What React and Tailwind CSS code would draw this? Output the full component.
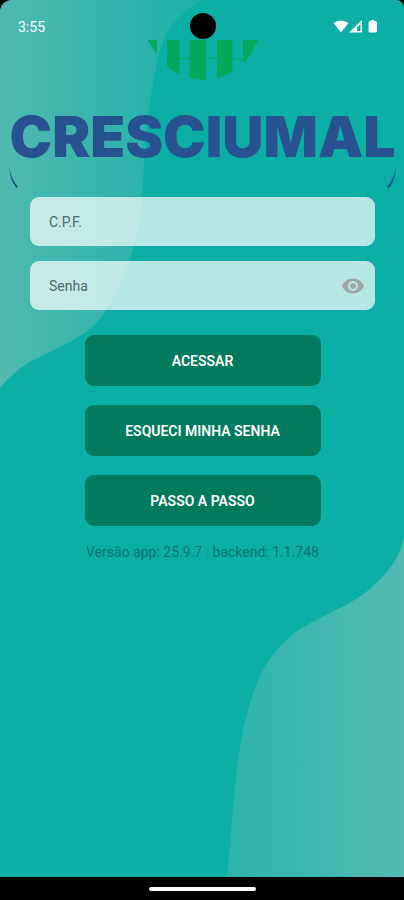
import { useState } from "react";
import { MdVisibility, MdVisibilityOff } from "react-icons/md";

function Backdrop() {
  return (
    <svg
      className="absolute inset-0 h-full w-full"
      viewBox="0 0 404 877"
      preserveAspectRatio="none"
      aria-hidden="true"
    >
      <defs>
        <linearGradient id="leftWave" gradientUnits="userSpaceOnUse" x1="0" y1="0" x2="200" y2="0">
          <stop offset="0" stopColor="#50b9b0" />
          <stop offset="1" stopColor="#1cb1a8" />
        </linearGradient>
        <linearGradient id="rightWave" gradientUnits="userSpaceOnUse" x1="226" y1="0" x2="404" y2="0">
          <stop offset="0" stopColor="#2cb4aa" />
          <stop offset="1" stopColor="#54bab3" />
        </linearGradient>
      </defs>
      <path
        fill="url(#leftWave)"
        d="M0 0H201C184 12 169 24 163 41C156 60 153 82 149 110C144 145 144 168 143 185C141 225 132 262 118 289C107 311 96 327 80 336C62 347 45 354 30 362C18 369 8 378 0 388Z"
      />
      <path
        fill="url(#rightWave)"
        d="M404 534C402 556 388 573 371 588C355 602 335 610 317 620C288 633 268 655 256 686C246 711 240 742 236 778C233 808 230 842 227 877H404Z"
      />
    </svg>
  );
}

function StatusBar() {
  return (
    <div className="relative grid h-10 grid-cols-3 items-center pt-3.5 pr-[25px] pl-[17px] text-white">
      <span className="text-sm leading-5">3:55</span>
      <span />
      <svg className="h-[15px] w-[46px] justify-self-end" viewBox="0 0 46 15" fill="currentColor" aria-label="Wi-Fi, sinal e bateria" role="img">
        <path d="M0.5 3Q8 -2 15.500 3L8 12.500Z" />
        <path fillRule="evenodd" d="M16 12.500L29 0V12.500ZM24 11H27.500V4L24 7.500Z" />
        <path d="M38 0H41V1H42.500Q44 1.500 44 3V11Q44 12.500 42.500 12.500H37Q35.500 12.500 35.500 11V3Q35.500 1.500 37 1H38Z" />
      </svg>
      <span className="absolute top-[13px] left-1/2 size-[26px] -translate-x-1/2 rounded-full bg-black" />
    </div>
  );
}

function Brand() {
  return (
    <div className="flex flex-col items-center">
      <svg className="h-10 w-[110px]" viewBox="0 0 110 40" fill="#05a95b" aria-hidden="true">
        <path d="M0 0H9V14Q4 8 0 0Z" />
        <path d="M19 0H31.500V34Q24 31 19 26Z" />
        <path d="M41.500 0H58V40Q49 40 41.500 38Z" />
        <path d="M69 0H84.500V32Q77 36 69 38Z" />
        <path d="M95 0H110Q104 13 96 23L95 21Z" />
        <path d="M31 18H42V19H31ZM58 18H69V19H58ZM84 18.500H96V19.500H84Z" />
      </svg>
      <h1 className="mt-7 font-['Inter',sans-serif] text-[57px] leading-[58px] font-black text-[#28528f]">
        CRESCIUMAL
      </h1>
      <div className="flex w-full justify-between px-2">
        <svg className="h-6 w-3" viewBox="0 0 12 24" fill="#1b458c" aria-hidden="true">
          <path d="M0.500 0Q1 12 9 21L7.500 22Q0 13 0.500 0Z" />
        </svg>
        <svg className="h-6 w-3" viewBox="0 0 12 24" fill="#1b458c" aria-hidden="true">
          <path d="M12 0Q11 12 3 21L5 22Q12 13 12 0Z" />
        </svg>
      </div>
    </div>
  );
}

const fieldClass =
  "h-[49px] w-full rounded-[9px] bg-white/70 pl-[19px] text-sm text-[#4c6a68] outline-none placeholder:text-[#4c6a68] placeholder:opacity-100";

function ActionButton({ children, type = "button" }) {
  return (
    <button
      type={type}
      className="h-[51px] w-[236px] rounded-[9px] bg-[#027a5e] text-sm font-semibold text-white"
    >
      {children}
    </button>
  );
}

export default function App() {
  const [visible, setVisible] = useState(false);

  return (
    <div className="flex min-h-screen flex-col bg-black font-['Roboto',sans-serif]">
      <main className="relative flex-1 overflow-hidden rounded-tl-[12px] rounded-tr-[8px] bg-[#0bafa6]">
        <Backdrop />
        <div className="relative pl-px">
          <StatusBar />
          <Brand />
          <form className="mt-[7px] flex flex-col items-center px-[29px]" onSubmit={(e) => e.preventDefault()}>
            <div className="flex w-full flex-col gap-[15px]">
              <input aria-label="C.P.F." placeholder="C.P.F." inputMode="numeric" className={fieldClass} />
              <div className="relative">
                <input
                  aria-label="Senha"
                  placeholder="Senha"
                  type={visible ? "text" : "password"}
                  className={fieldClass}
                />
                <button
                  type="button"
                  aria-label="Mostrar senha"
                  onClick={() => setVisible(!visible)}
                  className="absolute inset-y-0 right-2.5 flex items-center text-[#a2a6a8]"
                >
                  {visible ? <MdVisibilityOff size={24} /> : <MdVisibility size={24} />}
                </button>
              </div>
            </div>
            <div className="mt-[25px] flex flex-col gap-[19px]">
              <ActionButton type="submit">ACESSAR</ActionButton>
              <ActionButton>ESQUECI MINHA SENHA</ActionButton>
              <ActionButton>PASSO A PASSO</ActionButton>
            </div>
          </form>
          <p className="mt-4 text-center text-sm leading-5 text-[#0d716e]">
            Versão app: 25.9.7 <span className="text-[#16a49d]">|</span> backend: 1.1.748
          </p>
        </div>
      </main>
      <div className="flex h-[23px] items-center justify-center bg-black">
        <span className="h-1 w-[107px] rounded-full bg-white" />
      </div>
    </div>
  );
}
